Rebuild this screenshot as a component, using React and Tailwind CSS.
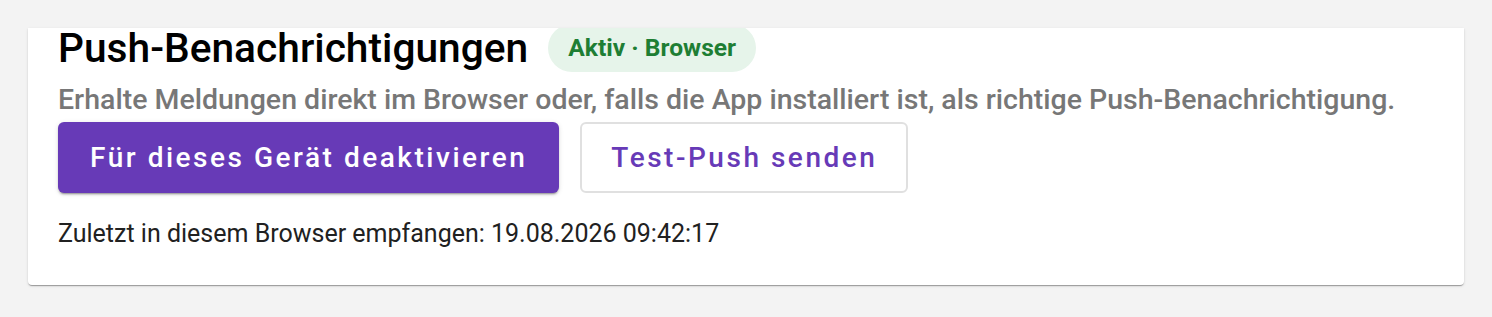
import React from 'react';

const font = { fontFamily: 'Roboto, "Liberation Sans", sans-serif' };

export default function App() {
  return (
    <div className="min-h-[317px] bg-[#f3f3f3] px-[28px] pt-[28px]" style={font}>
      <div className="overflow-hidden rounded-b-[4px] bg-white shadow-[0_2px_1px_-1px_rgba(0,0,0,0.2),0_1px_1px_0_rgba(0,0,0,0.14),0_1px_3px_0_rgba(0,0,0,0.12)]">
        <div className="-mt-[4px] px-[30px] pb-[36px]">
          {/* Title + status chip */}
          <div className="flex items-center gap-[20px]">
            <h2 className="text-[40.7px] font-medium leading-[40px] text-black">Push-Benachrichtigungen</h2>
            <span className="flex h-[48px] items-center rounded-full bg-[#e6f4ea] px-[20px] text-[24.6px] font-bold text-[#1e7e34]">
              Aktiv · Browser
            </span>
          </div>

          <p className="mt-[11px] text-[28.5px] font-medium leading-[34px] text-[#777777]">
            Erhalte Meldungen direkt im Browser oder, falls die App installiert ist, als richtige Push-Benachrichtigung.
          </p>

          {/* Actions */}
          <div className="mt-[5px] flex items-center gap-[21px]">
            <button className="h-[71px] rounded-[6px] bg-[#673ab7] px-[32px] text-[28px] font-medium tracking-[0.09em] text-white shadow-[0_3px_1px_-2px_rgba(0,0,0,0.2),0_2px_2px_0_rgba(0,0,0,0.14),0_1px_5px_0_rgba(0,0,0,0.12)]">
              Für dieses Gerät deaktivieren
            </button>
            <button className="h-[71px] rounded-[6px] border-2 border-[#e0e0e0] bg-white px-[29px] text-[28px] font-medium tracking-[0.09em] text-[#673ab7]">
              Test-Push senden
            </button>
          </div>

          <p className="mt-[26px] text-[25px] leading-[30px] text-[#212121]">
            Zuletzt in diesem Browser empfangen: 19.08.2026 09:42:17
          </p>
        </div>
      </div>
    </div>
  );
}
